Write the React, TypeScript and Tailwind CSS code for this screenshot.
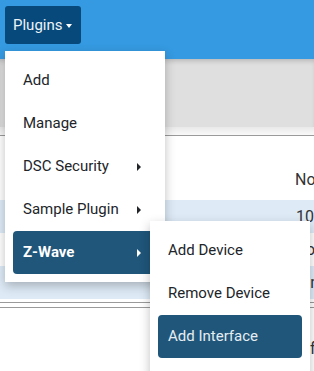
import React from "react";

function Caret() {
  return (
    <span className="ml-auto mr-[16px] inline-block h-0 w-0 border-y-[4px] border-l-[4px] border-y-transparent border-l-current" />
  );
}

function Item({ label, sub, active }: { label: string; sub?: boolean; active?: boolean }) {
  return (
    <div
      className={
        "flex h-[43px] items-center rounded-[4px] pl-[10px] text-[15px] " +
        (active ? "bg-[#1f567a] font-bold text-white" : "text-[#212529]")
      }
    >
      <span>{label}</span>
      {sub && <Caret />}
    </div>
  );
}

export default function App() {
  return (
    <div
      className="relative h-[371px] w-[314px] overflow-hidden bg-white text-[15px]"
      style={{ fontFamily: "Roboto, 'Liberation Sans', sans-serif" }}
    >
      {/* top bar */}
      <div className="h-[59px] bg-[#359ae1] pl-[5px] pt-[6px]">
        <div className="flex h-[38px] w-[76px] items-center rounded-[3px] bg-[#06497a] pl-[8px] text-[15px] text-[#eef3f7]">
          Plugins
          <span className="ml-[4px] mt-[1px] inline-block h-0 w-0 border-x-[3px] border-t-[4px] border-x-transparent border-t-white" />
        </div>
      </div>
      {/* gray bar */}
      <div className="h-[68px] bg-[#dfdfdf] shadow-[inset_0_4px_5px_-2px_rgba(0,0,0,0.18)]" />
      <div className="h-[9px] border-b border-[#9a9a9a] bg-gradient-to-b from-[#e9e9e9] to-[#f9f9f9]" />
      {/* table */}
      <div className="text-[16px] text-[#333]">
        <div className="flex h-[64px] items-end pb-[8px] pl-[295px]">Node</div>
        <div className="flex h-[33px] items-center bg-[#deebf7] pl-[296px]">1001</div>
        <div className="flex h-[33px] items-center pl-[296px]">Boo</div>
        <div className="flex h-[33px] items-center bg-[#deebf7] pl-[293px]">Lan</div>
        <div className="mt-[3px] h-[6px] border-y border-[#9a9a9a]" />
        <div className="flex h-[82px] items-center pl-[306px]">if</div>
      </div>

      {/* main dropdown */}
      <div className="absolute left-[5px] top-[51px] w-[160px] bg-white p-[8px] shadow-[0_4px_10px_rgba(0,0,0,0.25)]">
        <Item label="Add" />
        <Item label="Manage" />
        <Item label="DSC Security" sub />
        <Item label="Sample Plugin" sub />
        <Item label="Z-Wave" sub active />
      </div>

      {/* submenu */}
      <div className="absolute left-[150px] top-[221px] h-[170px] w-[160px] bg-white p-[8px] shadow-[0_4px_10px_rgba(0,0,0,0.25)]">
        <Item label="Add Device" />
        <Item label="Remove Device" />
        <div className="flex h-[43px] items-center rounded-[4px] bg-[#1f567a] pl-[10px] text-[15px] text-[#e6edf2]">
          Add Interface
        </div>
      </div>
    </div>
  );
}
